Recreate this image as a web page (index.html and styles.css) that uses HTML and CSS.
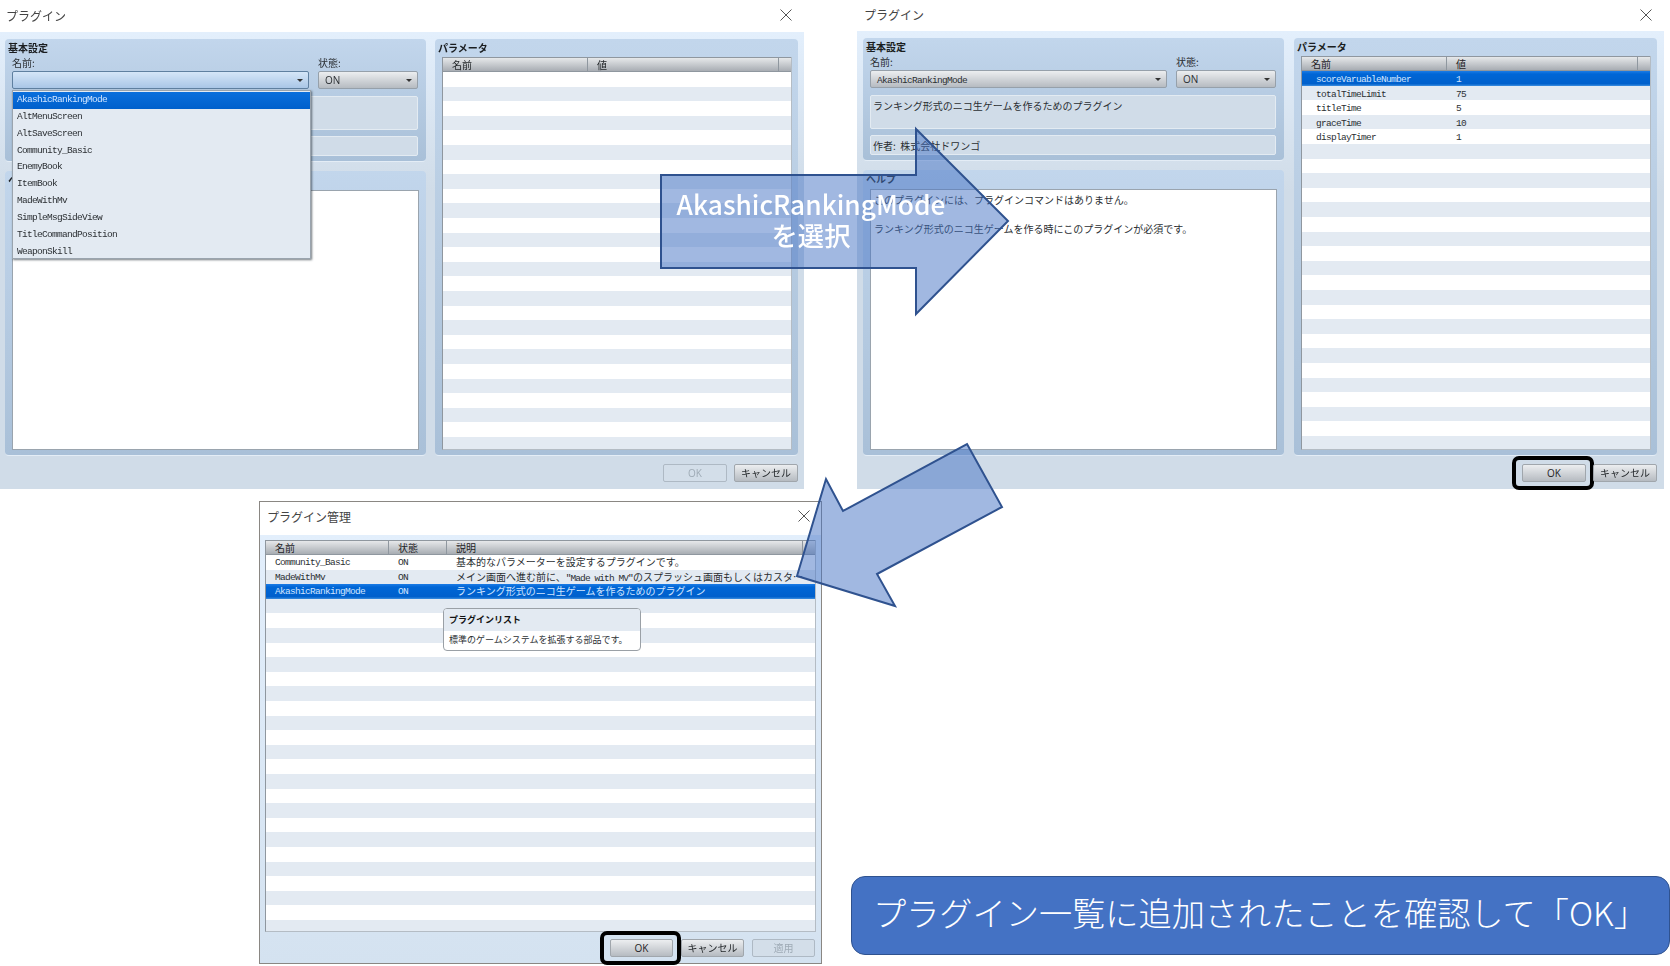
FILE: index.html
```html
<!DOCTYPE html>
<html lang="ja">
<head>
    <meta charset="UTF-8">
    <title>プラグイン</title>
    <link rel="stylesheet" href="styles.css">
</head>
<body>

<!-- プラグイン選択 (ドロップダウン) -->
<div class="window win-select">
    <div class="titlebar">
        <span>プラグイン</span>
        <svg class="close" viewBox="0 0 12 12"><path d="M0.5 0.5L11.5 11.5M11.5 0.5L0.5 11.5"/></svg>
    </div>
    <div class="win-body">
        <div class="panes">
            <div class="left-col">
                <div class="panel basic">
                    <div class="panel-title">基本設定</div>
                    <div class="field-row">
                        <div class="field">
                            <label>名前:</label>
                            <div class="select focused"><span class="caret"></span></div>
                            <div class="dropdown">
                                <div class="dd-item active">AkashicRankingMode</div>
                                <div class="dd-item">AltMenuScreen</div>
                                <div class="dd-item">AltSaveScreen</div>
                                <div class="dd-item">Community_Basic</div>
                                <div class="dd-item">EnemyBook</div>
                                <div class="dd-item">ItemBook</div>
                                <div class="dd-item">MadeWithMv</div>
                                <div class="dd-item">SimpleMsgSideView</div>
                                <div class="dd-item">TitleCommandPosition</div>
                                <div class="dd-item">WeaponSkill</div>
                            </div>
                        </div>
                        <div class="field">
                            <label>状態:</label>
                            <div class="select"><span class="select-on">ON</span><span class="caret"></span></div>
                        </div>
                    </div>
                    <div class="box desc"></div>
                    <div class="box author"></div>
                </div>
                <div class="panel help">
                    <div class="panel-title">ヘルプ</div>
                    <div class="help-box"></div>
                </div>
            </div>
            <div class="panel params">
                <div class="panel-title">パラメータ</div>
                <div class="grid">
                    <div class="grid-head param-cols">
                        <div class="th">名前</div><div class="th">値</div><div class="th"></div>
                    </div>
                    <div class="grid-rows"></div>
                </div>
            </div>
        </div>
        <div class="footer">
            <div class="btn disabled">OK</div>
            <div class="btn">キャンセル</div>
        </div>
    </div>
</div>

<!-- プラグイン選択後 -->
<div class="window win-params">
    <div class="titlebar">
        <span>プラグイン</span>
        <svg class="close" viewBox="0 0 12 12"><path d="M0.5 0.5L11.5 11.5M11.5 0.5L0.5 11.5"/></svg>
    </div>
    <div class="win-body">
        <div class="panes">
            <div class="left-col">
                <div class="panel basic">
                    <div class="panel-title">基本設定</div>
                    <div class="field-row">
                        <div class="field">
                            <label>名前:</label>
                            <div class="select"><span class="select-text">AkashicRankingMode</span><span class="caret"></span></div>
                        </div>
                        <div class="field">
                            <label>状態:</label>
                            <div class="select"><span class="select-on">ON</span><span class="caret"></span></div>
                        </div>
                    </div>
                    <div class="box desc">ランキング形式のニコ生ゲームを作るためのプラグイン</div>
                    <div class="box author">作者:&nbsp; 株式会社ドワンゴ</div>
                </div>
                <div class="panel help">
                    <div class="panel-title">ヘルプ</div>
                    <div class="help-box">このプラグインには、プラグインコマンドはありません。<br><br>ランキング形式のニコ生ゲームを作る時にこのプラグインが必須です。</div>
                </div>
            </div>
            <div class="panel params">
                <div class="panel-title">パラメータ</div>
                <div class="grid">
                    <div class="grid-head param-cols">
                        <div class="th">名前</div><div class="th">値</div><div class="th"></div>
                    </div>
                    <div class="grid-rows">
                        <div class="row param-cols selected"><div class="td name">scoreVaruableNumber</div><div class="td">1</div></div>
                        <div class="row param-cols"><div class="td name">totalTimeLimit</div><div class="td">75</div></div>
                        <div class="row param-cols"><div class="td name">titleTime</div><div class="td">5</div></div>
                        <div class="row param-cols"><div class="td name">graceTime</div><div class="td">10</div></div>
                        <div class="row param-cols"><div class="td name">displayTimer</div><div class="td">1</div></div>
                    </div>
                </div>
            </div>
        </div>
        <div class="footer">
            <div class="btn marked">OK</div>
            <div class="btn">キャンセル</div>
        </div>
    </div>
</div>

<!-- プラグイン管理 -->
<div class="window win-manager">
    <div class="titlebar">
        <span>プラグイン管理</span>
        <svg class="close" viewBox="0 0 12 12"><path d="M0.5 0.5L11.5 11.5M11.5 0.5L0.5 11.5"/></svg>
    </div>
    <div class="win-body">
        <div class="grid">
            <div class="grid-head manager-cols">
                <div class="th">名前</div><div class="th">状態</div><div class="th">説明</div><div class="th"></div>
            </div>
            <div class="grid-rows">
                <div class="row manager-cols"><div class="td">Community_Basic</div><div class="td">ON</div><div class="td jp">基本的なパラメーターを設定するプラグインです。</div></div>
                <div class="row manager-cols"><div class="td">MadeWithMv</div><div class="td">ON</div><div class="td jp">メイン画面へ進む前に、<span class="lat">"Made with MV"</span>のスプラッシュ画面もしくはカスタ…</div></div>
                <div class="row manager-cols selected"><div class="td">AkashicRankingMode</div><div class="td">ON</div><div class="td jp">ランキング形式のニコ生ゲームを作るためのプラグイン</div></div>
            </div>
            <div class="tooltip">
                <div class="tooltip-title">プラグインリスト</div>
                <div class="tooltip-text">標準のゲームシステムを拡張する部品です。</div>
            </div>
        </div>
        <div class="footer">
            <div class="btn marked">OK</div>
            <div class="btn">キャンセル</div>
            <div class="btn disabled">適用</div>
        </div>
    </div>
</div>

<!-- 矢印 -->
<svg class="arrows" viewBox="0 0 1670 966">
    <polygon points="661,175 916,175 916,129 1008,221 916,314 916,268 661,268"/>
    <polygon points="967,444 1002,507 877,574 895,606 797,576 826,479 843,511"/>
</svg>
<div class="arrow-label">AkashicRankingMode<br>を選択</div>

<div class="banner">プラグイン一覧に追加されたことを確認して「OK」</div>

</body>
</html>
```

FILE: styles.css
```css
* {
    box-sizing: border-box;
}

body {
    margin: 0;
    position: relative;
    width: 1670px;
    height: 966px;
    overflow: hidden;
    background-color: #fff;
    font-family: "Noto Sans CJK JP", "Liberation Sans", sans-serif;
    font-size: 10px;
    color: #2b2f33;
}

/* Windows */
.window {
    position: absolute;
    display: flex;
    flex-direction: column;
    background-color: #fff;
    filter: blur(0.35px);
}

.win-select {
    left: 0;
    top: 0;
    width: 804px;
    height: 489px;
}

.win-params {
    left: 857px;
    top: 0;
    width: 807px;
    height: 489px;
}

.win-manager {
    left: 259px;
    top: 501px;
    width: 563px;
    height: 463px;
    border: 1px solid #8a8783;
}

.titlebar {
    display: flex;
    flex: none;
    align-items: center;
    justify-content: space-between;
    height: 32px;
    padding: 0 12px 2px 6px;
    font-size: 12px;
    color: #444;
}

.win-params .titlebar {
    height: 31px;
    padding-left: 7px;
}

.win-manager .titlebar {
    height: 33px;
    padding: 0 11px 5px 7px;
}

.close {
    width: 12px;
    height: 12px;
    fill: none;
    stroke: #555;
    stroke-width: 1;
}

.win-body {
    display: flex;
    flex: 1;
    flex-direction: column;
    min-height: 0;
    padding: 7px 6px 0 5px;
    background: linear-gradient(#e3effc, #d0dce8 35%);
}

.win-params .win-body {
    padding-left: 6px;
    padding-right: 7px;
}

.win-manager .win-body {
    padding: 5px 5px 0 5px;
    background: linear-gradient(#e3effc, #d4e2f0);
}

.panes {
    display: grid;
    flex: 1;
    grid-template-columns: 421px 363px;
    gap: 9px;
    min-height: 0;
}

.win-params .panes {
    gap: 10px;
}

.left-col {
    display: flex;
    flex-direction: column;
    gap: 9px;
}

/* Panels */
.panel {
    display: flex;
    flex-direction: column;
    padding: 2px 7px 5px;
    border-radius: 4px;
    border-bottom: 1px solid #e4edf6;
    background: linear-gradient(#c2d6ec, #a9c0d8);
}

.basic {
    height: 123px;
    padding-right: 8px;
}

.help {
    flex: 1;
}

.params {
    padding-right: 6px;
    background: linear-gradient(#c2d6ec, #bcd0e5 30%, #a9c0d8);
}

.panel-title {
    flex: none;
    height: 14px;
    margin-left: -4px;
    font-weight: 700;
    line-height: 13px;
    color: #1a1d20;
}

.help .panel-title {
    height: 17px;
}

.params .panel-title {
    height: 16px;
}

.field-row {
    display: grid;
    grid-template-columns: 297px 100px;
    gap: 9px;
}

.field {
    position: relative;
}

.field label {
    display: block;
    height: 16px;
    line-height: 16px;
}

.select {
    display: flex;
    align-items: center;
    justify-content: space-between;
    height: 18px;
    padding: 0 5px 0 6px;
    border: 1px solid #96a0aa;
    border-radius: 2px;
    background: linear-gradient(#eceef0, #b6bbc1);
}

.select.focused {
    border-color: #5f80a0;
    background: linear-gradient(#d5e6f8, #a9c6e6);
}

.select.focused .caret {
    margin-left: auto;
}

.select-text {
    padding-top: 2px;
    font-family: "Liberation Mono", monospace;
    font-size: 9.5px;
    letter-spacing: -0.7px;
}

.select-on {
    font-family: "Open Sans", sans-serif;
    font-size: 10px;
}

.caret {
    width: 0;
    height: 0;
    border-left: 3px solid transparent;
    border-right: 3px solid transparent;
    border-top: 3px solid #333;
}

.dropdown {
    position: absolute;
    left: 0;
    top: 35px;
    z-index: 2;
    width: 299px;
    height: 169px;
    padding-top: 1px;
    border: 1px solid #9aa4ae;
    background-color: #e3eaf2;
    box-shadow: 1px 1px 2px rgba(40, 50, 60, 0.65);
}

.dd-item {
    height: 16.85px;
    padding-left: 4px;
    font-family: "Liberation Mono", monospace;
    font-size: 9.5px;
    letter-spacing: -0.7px;
    line-height: 16.85px;
}

.dd-item.active {
    background: linear-gradient(#0b6fdc, #0060cc);
    color: #cfe4ff;
}

.box {
    padding-left: 2px;
    border: 1px solid #e3ebf2;
    border-radius: 2px;
    background-color: #d0dce8;
}

.desc {
    height: 35px;
    margin-top: 7px;
    padding-top: 2px;
    line-height: 16px;
}

.author {
    height: 20px;
    margin-top: 6px;
    line-height: 20px;
}

.help-box {
    flex: 1;
    padding: 3px 3px;
    border: 1px solid #9aa4ae;
    background-color: #fff;
    line-height: 14.5px;
}

/* Lists */
.grid {
    position: relative;
    display: flex;
    flex: 1;
    flex-direction: column;
    min-height: 0;
    border-left: 1px solid #8f979f;
    border-right: 1px solid #b4bcc4;
    border-bottom: 1px solid #b4bcc4;
}

.grid-head {
    flex: none;
    height: 15px;
    border-top: 1px solid #8f979f;
    border-bottom: 1px solid #8f979f;
    background: linear-gradient(#e6e8ea, #a8adb3);
}

.param-cols {
    display: grid;
    grid-template-columns: 145px 191px 1fr;
}

.manager-cols {
    display: grid;
    grid-template-columns: 123px 58px 356px 1fr;
}

.th {
    padding-left: 9px;
    border-right: 1px solid #8f979f;
    line-height: 14px;
    color: #1f2326;
}

.th:last-child {
    border-right: none;
}

.grid-rows {
    flex: 1;
    background: repeating-linear-gradient(#fff 0 14.6px, #e3eaf2 14.6px 29.2px);
}

.row {
    height: 14.6px;
    font-family: "Liberation Mono", monospace;
    font-size: 9.5px;
    letter-spacing: -0.7px;
    line-height: 14.6px;
}

.row.selected {
    background: linear-gradient(#1c7ce6, #0066d6 20%, #0060cc 85%, #3c8ee0);
    color: #cfe4ff;
}

.td {
    padding-top: 1px;
    padding-left: 9px;
    overflow: hidden;
    white-space: nowrap;
}

.param-cols .td {
    padding-top: 2px;
}

.td.name {
    padding-left: 14px;
}

.td.jp {
    padding-top: 0;
    padding-left: 9px;
    font-family: "Noto Sans CJK JP", sans-serif;
    font-size: 10px;
    letter-spacing: 0;
}

.lat {
    font-family: "Liberation Mono", monospace;
    font-size: 9.5px;
    letter-spacing: -0.9px;
}

.tooltip {
    position: absolute;
    left: 177px;
    top: 68px;
    width: 198px;
    height: 43px;
    overflow: hidden;
    border: 1px solid #9aa0a6;
    border-radius: 4px;
    background-color: #fff;
    font-size: 9px;
}

.tooltip-title {
    height: 22px;
    padding-left: 5px;
    background-color: #e3eaf2;
    font-weight: 700;
    line-height: 22px;
    color: #111;
}

.tooltip-text {
    padding-left: 5px;
    line-height: 18px;
}

/* Footer buttons */
.footer {
    display: flex;
    flex: none;
    justify-content: flex-end;
    gap: 7px;
    height: 33px;
    padding-top: 8px;
}

.win-manager .footer {
    gap: 8px;
    height: 31px;
    padding-top: 7px;
    padding-right: 1px;
}

.btn {
    position: relative;
    width: 64px;
    height: 18px;
    border: 1px solid #a0a6ac;
    border-radius: 2px;
    background: linear-gradient(#eceef0, #b6bbc1);
    font-family: "Open Sans", "Noto Sans CJK JP", sans-serif;
    line-height: 16px;
    text-align: center;
    color: #1f2326;
}

.win-manager .btn {
    width: 63px;
}

.btn.disabled {
    border-color: #aeb9c4;
    background: #d3dee9;
    color: #9fabb6;
}

/* 操作箇所の枠 */
.btn.marked::after {
    content: "";
    position: absolute;
    inset: -9px -9px -9px -11px;
    border: 4px solid #000;
    border-radius: 7px;
}

/* Annotations */
.arrows {
    position: absolute;
    left: 0;
    top: 0;
    width: 1670px;
    height: 966px;
}

.arrows polygon {
    fill: rgba(68, 114, 196, 0.5);
    stroke: #2f528f;
    stroke-width: 2;
}

.arrow-label {
    position: absolute;
    left: 661px;
    top: 188px;
    width: 300px;
    font-family: "Noto Sans CJK JP", sans-serif;
    font-size: 26.3px;
    font-weight: 500;
    line-height: 31px;
    text-align: center;
    color: #fff;
}

.banner {
    position: absolute;
    left: 851px;
    top: 876px;
    display: flex;
    align-items: center;
    width: 819px;
    height: 79px;
    padding: 0 0 8px 21px;
    border: 1px solid #2f528f;
    border-radius: 14px;
    background-color: #4472c4;
    font-size: 33.2px;
    font-weight: 300;
    white-space: nowrap;
    color: #fff;
}
```
